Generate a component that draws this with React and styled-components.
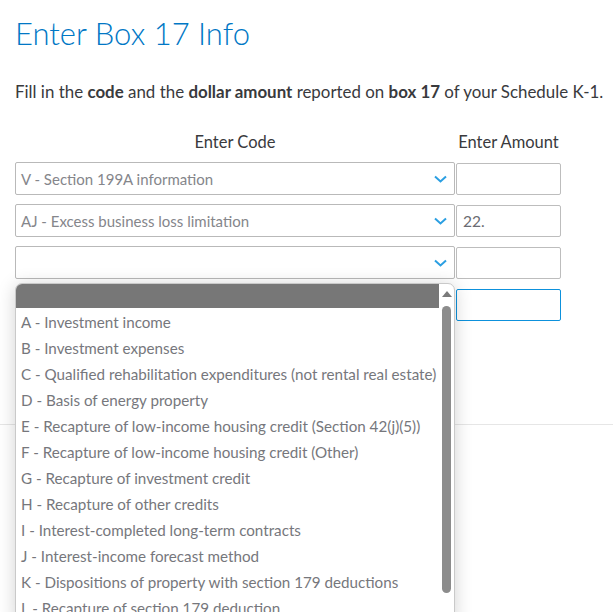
import React from "react";
import styled, { createGlobalStyle } from "styled-components";

const Global = createGlobalStyle`
  html, body { margin: 0; padding: 0; overflow: hidden; background: #fff; }
  body { font-family: Lato, "Open Sans", sans-serif; color: #393a3d; }
`;

const Page = styled.div`
  position: relative;
  padding: 13px 15px 0;
  width: 613px;
  height: 612px;
  box-sizing: border-box;
  overflow: hidden;
`;

const Title = styled.h1`
  margin: 0;
  font-size: 31px;
  line-height: 40px;
  font-weight: 300;
  color: #0077c5;
`;

const Intro = styled.p`
  margin: 27px 0 0;
  font-size: 16.9px;
  line-height: 24px;
  white-space: nowrap;
  color: #393a3d;
  b { font-weight: 700; color: #393a3d; }
`;

const Grid = styled.div`
  margin-top: 24px;
  display: grid;
  grid-template-columns: 440px 105px;
  column-gap: 1px;
  row-gap: 9px;
`;

const ColHead = styled.div`
  text-align: center;
  font-size: 16.5px;
  line-height: 24px;
  padding-top: 2px;
  margin-bottom: -1px;
  color: #393a3d;
`;

const SelectWrap = styled.div`
  position: relative;
`;

const SelectBox = styled.div`
  box-sizing: border-box;
  height: 33px;
  border: 1px solid #b9b9b9;
  border-radius: 2px;
  display: flex;
  align-items: center;
  justify-content: space-between;
  padding: 0 7px 0 5px;
  font-size: 15px;
  color: #85868b;
  background: #fff;
`;

const AmountBox = styled.div`
  box-sizing: border-box;
  height: 32px;
  margin-top: 1px;
  border: 1px solid ${(p) => (p.$focus ? "#0d91dc" : "#bdbdbd")};
  border-radius: 2px;
  display: flex;
  align-items: center;
  padding: 0 6px;
  font-size: 15.5px;
  color: #6b6c72;
  background: #fff;
`;

const Chevron = () => (
  <svg width="13" height="8" viewBox="0 0 13 8">
    <path d="M1 1.5 L6.5 6.5 L12 1.5" fill="none" stroke="#2b9fe2" strokeWidth="2" />
  </svg>
);

const List = styled.div`
  position: absolute;
  top: 37px;
  left: 0;
  width: 440px;
  height: 340px;
  box-sizing: border-box;
  border: 1px solid #c9c9c9;
  border-radius: 7px 7px 0 0;
  background: #fff;
  box-shadow: 0 2px 18px rgba(0, 0, 0, 0.18);
  overflow: hidden;
  display: flex;
  z-index: 5;
`;

const ListBody = styled.div`
  flex: 1;
  display: flex;
  flex-direction: column;
`;

const ListHead = styled.div`
  height: 24px;
  background: #777777;
  flex-shrink: 0;
`;

const Item = styled.div`
  height: 26px;
  line-height: 29px;
  padding-left: 5px;
  font-size: 15.2px;
  color: #76777c;
  white-space: nowrap;
`;

const Track = styled.div`
  width: 15px;
  display: flex;
  flex-direction: column;
  align-items: center;
  padding-top: 7px;
`;

const UpArrow = styled.div`
  width: 0;
  height: 0;
  border-left: 5px solid transparent;
  border-right: 5px solid transparent;
  border-bottom: 6px solid #7a7a7a;
`;

const Thumb = styled.div`
  margin-top: 9px;
  width: 9px;
  height: 287px;
  border-radius: 5px;
  background: #8c8c8c;
`;

const Divider = styled.div`
  position: absolute;
  left: 0;
  right: 0;
  top: 424px;
  height: 1px;
  background: #e6e6e6;
`;

const items = [
  "A - Investment income",
  "B - Investment expenses",
  "C - Qualified rehabilitation expenditures (not rental real estate)",
  "D - Basis of energy property",
  "E - Recapture of low-income housing credit (Section 42(j)(5))",
  "F - Recapture of low-income housing credit (Other)",
  "G - Recapture of investment credit",
  "H - Recapture of other credits",
  "I - Interest-completed long-term contracts",
  "J - Interest-income forecast method",
  "K - Dispositions of property with section 179 deductions",
  "L - Recapture of section 179 deduction",
];

export default function App() {
  return (
    <Page>
      <Global />
      <Title>Enter Box 17 Info</Title>
      <Intro>
        Fill in the <b>code</b> and the <b>dollar amount</b> reported on <b>box 17</b> of your Schedule K-1.
      </Intro>
      <Grid>
        <ColHead>Enter Code</ColHead>
        <ColHead>Enter Amount</ColHead>

        <SelectWrap>
          <SelectBox>V - Section 199A information<Chevron /></SelectBox>
        </SelectWrap>
        <AmountBox />

        <SelectWrap>
          <SelectBox>AJ - Excess business loss limitation<Chevron /></SelectBox>
        </SelectWrap>
        <AmountBox>22.</AmountBox>

        <SelectWrap>
          <SelectBox><span /><Chevron /></SelectBox>
          <List>
            <ListBody>
              <ListHead />
              {items.map((t) => (
                <Item key={t}>{t}</Item>
              ))}
            </ListBody>
            <Track>
              <UpArrow />
              <Thumb />
            </Track>
          </List>
        </SelectWrap>
        <AmountBox />

        <div />
        <AmountBox $focus />
      </Grid>
      <Divider />
    </Page>
  );
}
